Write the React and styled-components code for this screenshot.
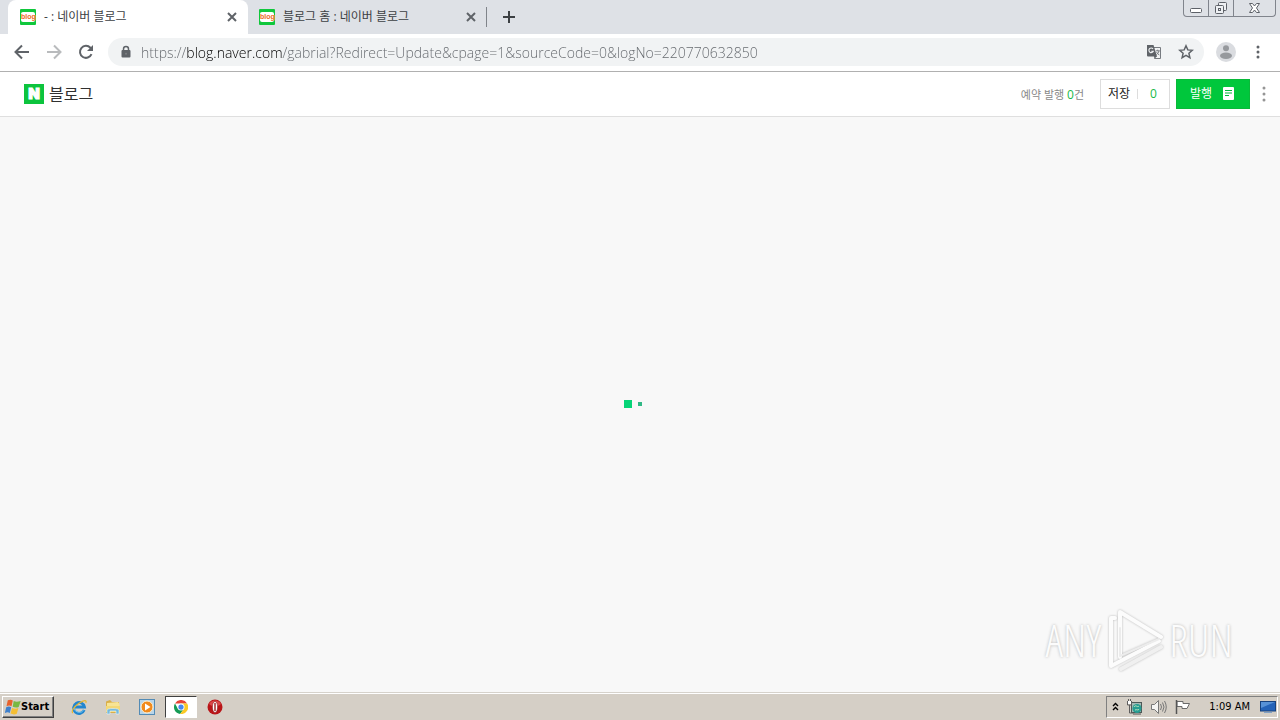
import React from "react";
import styled, { createGlobalStyle } from "styled-components";

const GlobalStyle = createGlobalStyle`
  * { box-sizing: border-box; }
  body {
    margin: 0;
    font-family: "Open Sans", "Noto Sans CJK KR", sans-serif;
    font-size: 12px;
    color: #333;
  }
  button, input { font: inherit; color: inherit; }
  button { margin: 0; padding: 0; border: 0; background: none; cursor: pointer; }
  svg { display: block; flex: none; }
`;

const Screen = styled.div`
  display: flex;
  flex-direction: column;
  min-height: 100vh;
  background: #f8f8f8;
`;

const TabStrip = styled.div`
  display: flex;
  height: 34px;
  padding-left: 8px;
  background: #dee1e6;
`;

const Tab = styled.div`
  display: flex;
  align-items: center;
  width: 240px;
  padding: 0 10px 0 12px;
  border-radius: 8px 8px 0 0;
  background: ${(p) => (p.$active ? "#fff" : "transparent")};
`;

const SecondTab = styled(Tab)`
  width: 238px;
  padding: 0 9px 0 11px;
`;

const TabTitle = styled.button`
  display: flex;
  flex: 1;
  align-items: center;
  gap: 8px;
  line-height: 16px;
  text-align: left;
  white-space: nowrap;
  color: #3c4043;
`;

const Favicon = styled.span`
  display: flex;
  align-items: center;
  justify-content: center;
  width: 16px;
  height: 16px;
  border-radius: 1px;
  background: #10c73c;

  span {
    width: 14px;
    height: 10px;
    border-radius: 2px;
    background: #fff;
    color: #ee6a25;
    font: 700 7px/9px "Liberation Sans", sans-serif;
    text-align: center;
  }
`;

const IconButton = styled.button`
  display: flex;
  align-items: center;
  justify-content: center;
  width: ${(p) => p.$size || 32}px;
  height: ${(p) => p.$size || 32}px;
  color: ${(p) => p.$color || "#5f6368"};
`;

const NewTab = styled(IconButton)`
  width: 44px;
  height: 34px;
  color: #3c4043;
`;

const TabDivider = styled.span`
  width: 1px;
  height: 20px;
  margin-top: 7px;
  background: #80848a;
`;

const WindowControls = styled.div`
  display: flex;
  height: 17px;
  margin: 0 4px 0 auto;
  border: 1px solid #80848c;
  border-top: 0;
  border-radius: 0 0 4px 4px;
`;

const WindowButton = styled.button`
  display: flex;
  align-items: center;
  justify-content: center;
  width: ${(p) => p.$width}px;
  color: #5d6168;

  & + & { border-left: 1px solid #80848c; }
`;

const Toolbar = styled.div`
  display: flex;
  align-items: center;
  height: 38px;
  padding: 0 6px 1px;
  border-bottom: 1px solid #b0b0b0;
  background: #fff;
`;

const AddressBar = styled.label`
  display: flex;
  flex: 1;
  align-items: center;
  height: 28px;
  margin: 0 6px;
  padding: 0 2px 0 12px;
  border-radius: 14px;
  background: #f1f3f4;
`;

const Address = styled.input`
  flex: 1;
  min-width: 0;
  height: 24px;
  margin-left: 9px;
  padding: 0;
  border: 0;
  outline: 0;
  font-family: "Open Sans", sans-serif;
  font-weight: 300;
  font-size: 14px;
  color: transparent;
  background: linear-gradient(90deg, #62666b 46px, #000 46px 142px, #62666b 142px);
  background-clip: text;
  -webkit-background-clip: text;
`;

const EditorHeader = styled.header`
  display: flex;
  align-items: center;
  height: 45px;
  padding-left: 24px;
  border-bottom: 1px solid #dfdfdf;
  background: #fff;
`;

const Brand = styled.a`
  display: flex;
  align-items: center;
  gap: 5px;
  color: #303030;
  font-size: 16px;
  line-height: 20px;
  text-decoration: none;
`;

const BrandMark = styled.span`
  width: 20px;
  height: 20px;
  background: #0cc43d;
  color: #fff;
  font: 900 15px/20px Inter, sans-serif;
  -webkit-text-stroke: 1px #fff;
  text-align: center;
`;

const HeaderActions = styled.div`
  display: flex;
  align-items: center;
  margin-left: auto;
`;

const Reserved = styled.span`
  margin-right: 16px;
  color: #888;
  font-size: 11px;

  b { color: #18b949; font-size: 12px; font-weight: 400; }
`;

const SaveGroup = styled.div`
  display: flex;
  align-items: center;
  width: 70px;
  height: 30px;
  margin-right: 6px;
  border: 1px solid #ddd;
`;

const SaveButton = styled.button`
  width: ${(p) => p.$width}px;
  line-height: 16px;
  color: ${(p) => p.$color};

  & + & { line-height: 10px; border-left: 1px solid #ddd; }
`;

const PublishButton = styled.button`
  display: flex;
  align-items: center;
  justify-content: center;
  gap: 11px;
  width: 74px;
  height: 30px;
  padding: 0 2px 2px 0;
  border: 1px solid #09b939;
  background: #00c73c;
  color: #fff;
`;

const MoreButton = styled(IconButton)`
  width: 28px;
  margin-right: 2px;
`;

const Workspace = styled.main`
  position: relative;
  display: flex;
  flex: 1;
  align-items: center;
  justify-content: center;
  padding-bottom: 2px;
`;

const Loader = styled.div`
  display: flex;
  align-items: center;
  gap: 6px;
  width: 32px;
  height: 8px;
`;

const LoaderDot = styled.span`
  width: ${(p) => p.$size}px;
  height: ${(p) => p.$size}px;
  background: ${(p) => p.$color};
`;

const Watermark = styled.div`
  position: absolute;
  right: 47px;
  bottom: 19px;
  display: flex;
  align-items: center;
  gap: 5px;
  color: #fcfcfc;
  font: 300 44px/66px "Open Sans Condensed Light", "Open Sans Condensed", "Noto Sans ExtraCondensed", "Liberation Sans Narrow", sans-serif;
  text-shadow: 0 0 3px #b4b4b4;
  pointer-events: none;

  svg { filter: drop-shadow(0 0 1px #b8b8b8); }
`;

const Taskbar = styled.footer`
  display: flex;
  align-items: center;
  height: 28px;
  padding: 0 2px;
  border-top: 1px solid #d6d2cb;
  background: #d5cfc6;
  box-shadow: inset 0 1px #fff;
  color: #000;
  font-family: "DejaVu Sans Condensed", "DejaVu Sans", sans-serif;
  font-size: 11px;
`;

const StartButton = styled.button`
  display: flex;
  align-items: center;
  width: 52px;
  height: 22px;
  padding-left: 2px;
  border: 1px solid;
  border-color: #fff #404040 #404040 #fff;
  box-shadow: inset -1px -1px #808080;
  font-weight: 700;
`;

const QuickLaunch = styled.nav`
  display: flex;
  margin-left: 9px;
  gap: 2px;
`;

const TaskButton = styled.button`
  display: flex;
  align-items: center;
  justify-content: center;
  width: 32px;
  height: 22px;
  border: 1px solid;
  border-color: ${(p) => (p.$active ? "#404040 #fff #fff #404040" : "transparent")};
  background: ${(p) => (p.$active ? "#fff" : "transparent")};
`;

const Tray = styled.div`
  display: flex;
  align-items: center;
  width: 172px;
  height: 22px;
  margin-left: auto;
  padding: 0 1px 0 5px;
  gap: 7px;
  border: 1px solid;
  border-color: #808080 #fff #fff #808080;

  time { margin: 0 3px 0 auto; white-space: nowrap; }
`;

const TrayButton = styled.button`
  display: flex;
  align-items: center;
`;

const BlogIcon = () => <Favicon aria-hidden="true"><span>blog</span></Favicon>;

const CloseIcon = () => (
  <svg width="12" height="12" viewBox="0 0 12 12" stroke="currentColor" strokeWidth="2">
    <path d="M2 2l8 8M10 2l-8 8" />
  </svg>
);

const Dots = ({ r = 1.5, step = 5 }) => (
  <svg width="4" height="18" fill="currentColor">
    <circle cx="2" cy={9 - step} r={r} /><circle cx="2" cy="9" r={r} /><circle cx="2" cy={9 + step} r={r} />
  </svg>
);

const Arrow = ({ forward }) => (
  <svg width="16" height="16" viewBox="0 0 16 16" fill="none" stroke="currentColor" strokeWidth="2">
    <path d={forward ? "M1 8h13M8 1.5L14.5 8 8 14.5" : "M15 8H2M8 1.5L1.5 8 8 14.5"} />
  </svg>
);

const ReloadIcon = () => (
  <svg width="16" height="16" viewBox="0 0 16 16" fill="none" stroke="currentColor" strokeWidth="2">
    <path d="M13.5 10.2A6 6 0 1 1 12.4 3.8L14 5.5" /><path d="M15 1v6H9z" fill="currentColor" stroke="none" />
  </svg>
);

const LockIcon = () => (
  <svg width="12" height="14" viewBox="0 0 12 14">
    <path d="M3.5 6V4a2.5 2.5 0 0 1 5 0v2" fill="none" stroke="#5f6368" strokeWidth="1.5" />
    <rect x="1.5" y="5" width="9" height="7.5" rx="1" fill="#5f6368" /><circle cx="6" cy="8.7" r="1" fill="#7b7e82" />
  </svg>
);

const TranslateIcon = () => (
  <svg width="16" height="16" viewBox="0 0 16 16" fill="none">
    <path d="M8 3.500h6.500v11H8.500" fill="#f1f3f4" stroke="#777b80" />
    <path d="M1 1h6.500l3.500 11.500H2a1 1 0 0 1-1-1z" fill="#5f6368" />
    <path d="M7 4.800A2.300 2.300 0 1 0 7.300 7.300H5.200" stroke="#eef0f2" strokeWidth="1.1" />
    <path d="M9.800 6.800h4M11.700 5.700v1M13 7c-.5 1.700-1.300 2.700-2.600 3.700M10.500 8.200l2.800 3" stroke="#777b80" />
    <path d="M8 12h3L8.500 15z" fill="#5f6368" />
  </svg>
);

const StarIcon = () => (
  <svg width="16" height="16" viewBox="0 0 16 16" fill="none" stroke="currentColor" strokeWidth="1.5">
    <path d="M8 1.8l1.8 4.1 4.5.4-3.4 3 1 4.4L8 11.4l-3.9 2.3 1-4.4-3.4-3 4.500-.4z" />
  </svg>
);

const ProfileIcon = () => (
  <svg width="20" height="20" viewBox="0 0 20 20">
    <circle cx="10" cy="10" r="10" fill="#dadce0" />
    <circle cx="10" cy="6.3" r="3" fill="#96999d" /><ellipse cx="10" cy="13.8" rx="6" ry="3.2" fill="#96999d" />
  </svg>
);

const DocumentIcon = () => (
  <svg width="11" height="13" viewBox="0 0 11 13">
    <rect width="11" height="13" rx="1" fill="#fff" /><path d="M2 3.5h7M2 6h7M2 8.500h4" stroke="#00b83a" />
  </svg>
);

const PlayMark = () => (
  <svg width="58" height="64" viewBox="0 0 58 64" fill="none" stroke="#fcfcfc" strokeWidth="4" strokeLinejoin="round" strokeLinecap="round">
    <path d="M14 49V4l41 25" /><path d="M9 10H5v48l48-25" /><path d="M14 20v28l39-17" stroke="#ececec" strokeWidth="2" /><path d="M15 61l40-22" stroke="#f0f0f0" />
  </svg>
);

const WindowsFlag = () => (
  <svg width="16" height="16" viewBox="0 0 16 16">
    <path d="M2.8 1.3c2-1 3.4-.8 5 .1L6.500 7.300c-1.500-.9-3-1-5 0z" fill="#e8622c" />
    <path d="M8.700 2c2 .9 3.700.9 7 .1l-2 6c-2.200.8-4 .6-6-.3z" fill="#78b843" />
    <path d="M1.200 8.300c2-1 3.500-.9 5 0L4.800 14c-1.500-1-3-1-5 0z" fill="#3f80cc" />
    <path d="M7.100 8.900c2 .9 3.800 1 6.300.2l-1.600 5.700c-2.300.9-4 .7-6.300-.2z" fill="#f5bf34" />
  </svg>
);

const ExplorerIcon = () => (
  <svg width="16" height="16" viewBox="0 0 16 16" fill="none">
    <path d="M13.2 11A5.500 5.500 0 1 1 13.500 8H4" stroke="#2286cf" strokeWidth="2.8" />
    <path d="M12.8 10.8A5.300 5.300 0 0 1 3 9" stroke="#78c7ee" />
    <path d="M2 14C-.4 13 3 7.500 8 4.200S16.200.8 14.800 4" stroke="#e8b831" strokeWidth="1.200" />
  </svg>
);

const FolderIcon = () => (
  <svg width="16" height="16" viewBox="0 0 16 16">
    <path d="M1 2.5L5 1l2 2h7v11H1z" fill="#d9af49" /><path d="M2 4l11-1 1.500 2v5H2z" fill="#f7e494" />
    <path d="M1 7h14v6H1z" fill="#f3d876" /><path d="M2 15v-4c0-2 12-2 12 0v4h-3v-3H5v3z" fill="#76b9db" stroke="#e7f4f9" strokeWidth=".6" />
  </svg>
);

const MediaIcon = () => (
  <svg width="16" height="16" viewBox="0 0 16 16">
    <rect x=".5" y=".5" width="15" height="15" fill="#b8d5e9" stroke="#538bb5" />
    <circle cx="8" cy="8" r="6" fill="#f18a1c" stroke="#fff0d1" /><path d="M6 4.500v7L11.500 8z" fill="#fff" />
  </svg>
);

const ChromeIcon = () => (
  <svg width="14" height="14" viewBox="0 0 16 16">
    <path d="M1.100 4A8 8 0 0 1 15 4H8z" fill="#e74335" /><path d="M1.100 4A8 8 0 0 0 7 16l4.500-6L8 4.100 4.500 10z" fill="#159b55" />
    <path d="M15 4a8 8 0 0 1-8 12l4.500-6L8 4z" fill="#fbc925" />
    <circle cx="8" cy="8" r="4" fill="#fff" /><circle cx="8" cy="8" r="3" fill="#4688ef" />
  </svg>
);

const OperaIcon = () => (
  <svg width="16" height="16" viewBox="0 0 16 16">
    <circle cx="8" cy="8" r="7.500" fill="#b91518" /><path d="M2 5a7 7 0 0 1 12 0c-3 3-9 3-12 0" fill="#db494a" />
    <ellipse cx="8" cy="8" rx="2.600" ry="5.500" fill="#fff" stroke="#7c0b0d" strokeWidth=".5" /><path d="M8 4v8" stroke="#a42a2b" strokeWidth="1.500" />
  </svg>
);

const ChevronsIcon = () => (
  <svg width="7" height="10" viewBox="0 0 7 10" fill="none" stroke="#000" strokeWidth="1.4"><path d="M1 4l2.500-2.500L6 4M1 8l2.500-2.500L6 8" /></svg>
);

const NetworkIcon = () => (
  <svg width="17" height="16" viewBox="0 0 17 16" fill="none">
    <rect x="5.500" y="3.500" width="10" height="10" fill="#a4b9b4" stroke="#4c5957" /><circle cx="11" cy="9.500" r="4.500" fill="#289d92" />
    <path d="M8 8c2-3 3 1 5-1M9 11c2-1 3 1 4-1" stroke="#bce7bd" /><path d="M1.500 2v4h4V2M2.500 0v2M4.500 0v2M3.500 6v8h4" stroke="#5e5e5e" /><path d="M2 2h3v3H2z" fill="#fff" />
    <path d="M7 15h8" stroke="#555" />
  </svg>
);

const SoundIcon = () => (
  <svg width="17" height="16" viewBox="0 0 17 16" fill="none" stroke="#777">
    <path d="M1.500 5.500h3l4-4v13l-4-4h-3z" fill="#f4f4f2" /><path d="M10.500 5q2 3 0 6M12.500 3.500q3 4.500 0 9M14.500 2q3.500 6 0 12" />
  </svg>
);

const FlagIcon = () => (
  <svg width="17" height="16" viewBox="0 0 17 16">
    <path d="M3 2.500h6v2h6.500L13 9.500H8v-2H3z" fill="#fff" stroke="#6a6a6a" /><path d="M2.500 1v14" stroke="#555" strokeWidth="1.500" />
  </svg>
);

const DesktopIcon = () => (
  <svg width="16" height="14" viewBox="0 0 16 14">
    <rect x=".5" y="1.500" width="15" height="9.500" fill="#2463b8" stroke="#17427e" /><path d="M1 2h14L1 8z" fill="#5792d7" /><path d="M4 12.500h8" stroke="#83a2c5" />
  </svg>
);

export default function App() {
  return (
    <>
      <GlobalStyle />
      <Screen>
        <TabStrip>
          <Tab $active>
            <TabTitle><BlogIcon />- : 네이버 블로그</TabTitle>
            <IconButton $size={12} aria-label="Close tab"><CloseIcon /></IconButton>
          </Tab>
          <SecondTab>
            <TabTitle><BlogIcon />블로그 홈 : 네이버 블로그</TabTitle>
            <IconButton $size={12} aria-label="Close tab"><CloseIcon /></IconButton>
          </SecondTab>
          <TabDivider />
          <NewTab aria-label="New tab">
            <svg width="12" height="12" stroke="currentColor" strokeWidth="2"><path d="M6 0v12M0 6h12" /></svg>
          </NewTab>
          <WindowControls>
            <WindowButton $width={24} aria-label="Minimize">
              <svg width="13" height="12" fill="#fff" stroke="currentColor"><rect x=".5" y="6.500" width="11" height="4" rx="1" /></svg>
            </WindowButton>
            <WindowButton $width={25} aria-label="Restore">
              <svg width="14" height="14" fill="#eef0f3" stroke="currentColor"><rect x="4.500" y="1.500" width="8" height="8" rx="1" /><rect x="1.500" y="4.500" width="8" height="8" rx="1" /><rect x="4.500" y="7.500" width="2" height="2" /></svg>
            </WindowButton>
            <WindowButton $width={42} aria-label="Close">
              <svg width="13" height="12" fill="#fff" stroke="currentColor"><path d="M1.500 1.500h3L6.500 4l2-2.500h3L8.500 6l3 4.500h-3L6.500 8l-2 2.500h-3L4.500 6z" /></svg>
            </WindowButton>
          </WindowControls>
        </TabStrip>
        <Toolbar>
          <IconButton aria-label="Back"><Arrow /></IconButton>
          <IconButton $color="#b9bbbd" aria-label="Forward"><Arrow forward /></IconButton>
          <IconButton aria-label="Reload"><ReloadIcon /></IconButton>
          <AddressBar>
            <LockIcon />
            <Address aria-label="Address" defaultValue="https://blog.naver.com/gabrial?Redirect=Update&cpage=1&sourceCode=0&logNo=220770632850" />
            <IconButton aria-label="Translate"><TranslateIcon /></IconButton>
            <IconButton aria-label="Bookmark"><StarIcon /></IconButton>
          </AddressBar>
          <IconButton aria-label="Profile"><ProfileIcon /></IconButton>
          <IconButton aria-label="Browser menu"><Dots /></IconButton>
        </Toolbar>
        <EditorHeader>
          <Brand href="#"><BrandMark>N</BrandMark>블로그</Brand>
          <HeaderActions>
            <Reserved>예약 발행 <b>0</b>건</Reserved>
            <SaveGroup>
              <SaveButton $width={36} $color="#222">저장</SaveButton>
              <SaveButton $width={32} $color="#18b949" aria-label="Saved drafts">0</SaveButton>
            </SaveGroup>
            <PublishButton>발행<DocumentIcon /></PublishButton>
            <MoreButton $color="#959595" aria-label="More"><Dots step={6} /></MoreButton>
          </HeaderActions>
        </EditorHeader>
        <Workspace>
          <Loader role="status" aria-label="Loading">
            <LoaderDot $size={8} $color="#06d477" /><LoaderDot $size={4} $color="#30b885" />
          </Loader>
          <Watermark><span>ANY</span><PlayMark /><span>RUN</span></Watermark>
        </Workspace>
        <Taskbar>
          <StartButton><WindowsFlag />Start</StartButton>
          <QuickLaunch aria-label="Quick launch">
            <TaskButton aria-label="Internet Explorer"><ExplorerIcon /></TaskButton>
            <TaskButton aria-label="Files"><FolderIcon /></TaskButton>
            <TaskButton aria-label="Media Player"><MediaIcon /></TaskButton>
            <TaskButton $active aria-label="Chrome"><ChromeIcon /></TaskButton>
            <TaskButton aria-label="Opera"><OperaIcon /></TaskButton>
          </QuickLaunch>
          <Tray>
            <TrayButton aria-label="Show hidden icons"><ChevronsIcon /></TrayButton>
            <TrayButton aria-label="Network"><NetworkIcon /></TrayButton>
            <TrayButton aria-label="Volume"><SoundIcon /></TrayButton>
            <TrayButton aria-label="Notifications"><FlagIcon /></TrayButton>
            <time>1:09 AM</time>
            <TrayButton aria-label="Show desktop"><DesktopIcon /></TrayButton>
          </Tray>
        </Taskbar>
      </Screen>
    </>
  );
}
